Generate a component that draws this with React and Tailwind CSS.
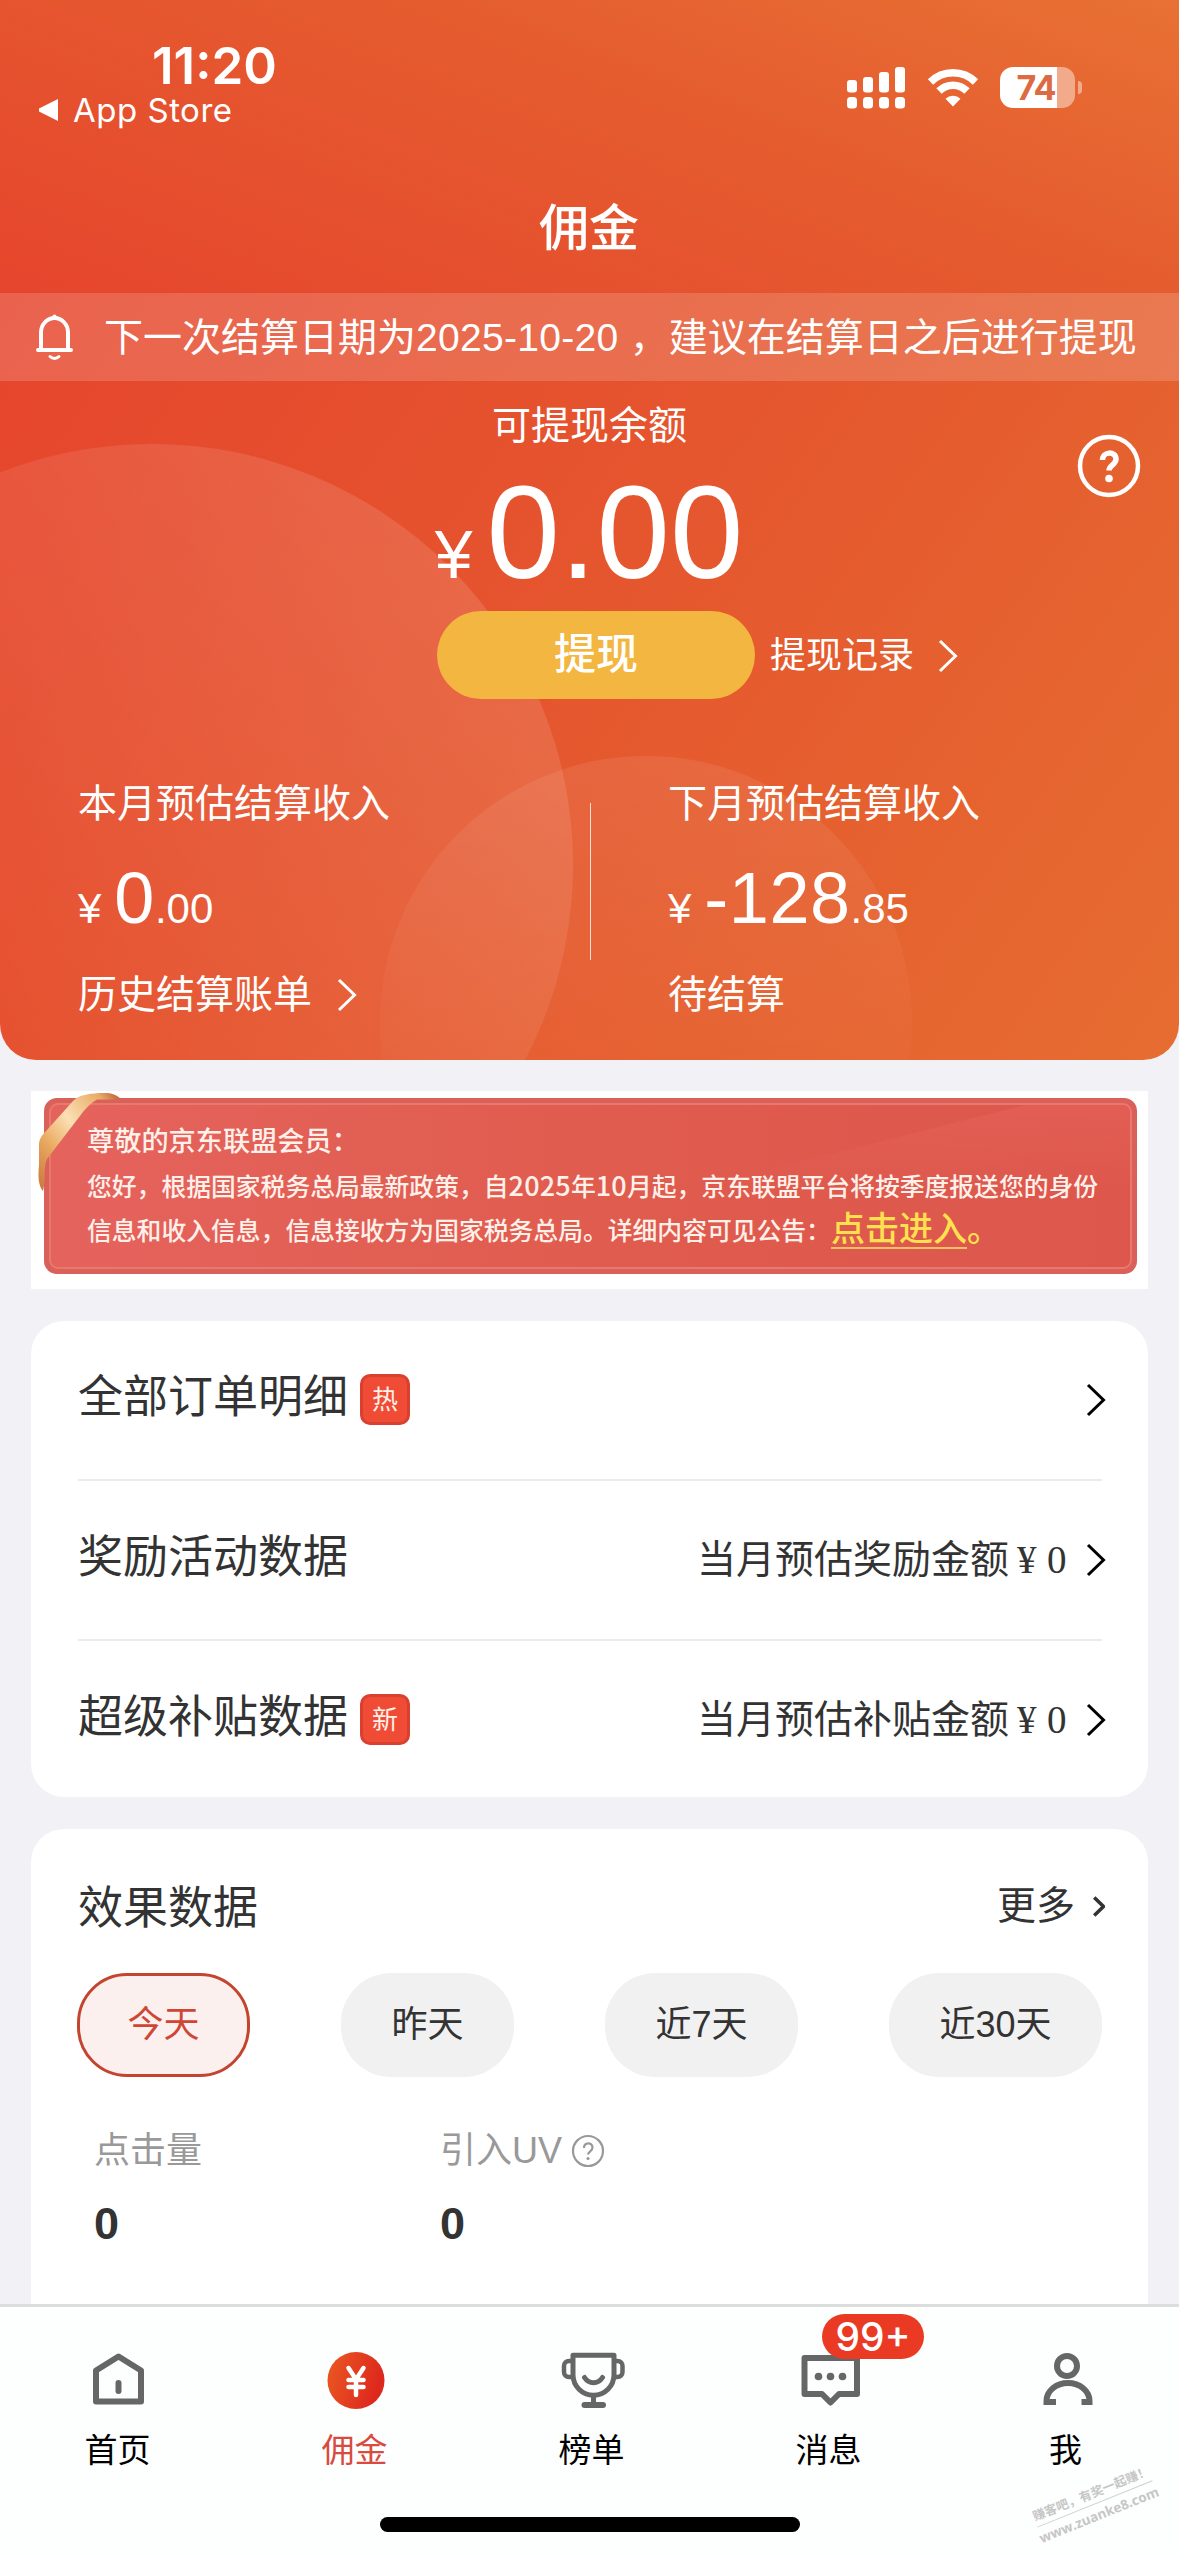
import React from 'react';

const tabs = [
  { name: '首页', icon: HomeIcon },
  { name: '佣金', icon: CoinIcon, active: true },
  { name: '榜单', icon: TrophyIcon },
  { name: '消息', icon: MessageIcon, badge: '99+' },
  { name: '我', icon: UserIcon },
];

const orderRows = [
  { title: '全部订单明细', tag: '热' },
  { title: '奖励活动数据', label: '当月预估奖励金额' },
  { title: '超级补贴数据', tag: '新', label: '当月预估补贴金额' },
];

const ranges = [
  { name: '今天', width: 'w-[173px]', active: true },
  { name: '昨天', width: 'w-[173px]' },
  { name: '近7天', width: 'w-[193px]' },
  { name: '近30天', width: 'w-[213px]' },
];

function HomeIcon() {
  return (
    <svg width="60" height="60" viewBox="0 0 60 60" fill="none" stroke="#666" strokeWidth="6" strokeLinejoin="round" strokeLinecap="round">
      <path d="M7 19.500 29.500 5.500 52 19.500V50.500H7Z" />
      <path d="M29.500 32v8" />
    </svg>
  );
}

function CoinIcon() {
  return (
    <svg width="60" height="60" viewBox="0 0 60 60" fill="none">
      <defs>
        <linearGradient id="coin" x1="0" y1="0" x2="1" y2="0.3">
          <stop offset="0" stopColor="#ea5a22" />
          <stop offset="1" stopColor="#dd281d" />
        </linearGradient>
      </defs>
      <circle cx="30" cy="29.500" r="28.500" fill="url(#coin)" />
      <path d="M22.500 17 30 28.500 37.500 17M22.500 29h15M22.500 36h15M30 29v15" stroke="#fff" strokeWidth="4.500" strokeLinecap="round" />
    </svg>
  );
}

function TrophyIcon() {
  return (
    <svg width="66" height="60" viewBox="0 0 66 60" fill="none" stroke="#666" strokeWidth="5" strokeLinecap="round" strokeLinejoin="round">
      <path d="M13 4.200h41v19.500a20.500 20.500 0 0 1-41 0Z" />
      <path d="M12.500 10H9a5 5 0 0 0-5 5v6a5 5 0 0 0 5 5h3.500M54.500 10H57.500a5 5 0 0 1 5 5v6a5 5 0 0 1-5 5h-3" strokeWidth="4.500" />
      <path d="M24.500 26.500c4.500 7 13.500 7 18 0M33.500 46v7" />
      <path d="M24.500 54h18.500" strokeWidth="6" />
    </svg>
  );
}

function MessageIcon() {
  return (
    <svg className="overflow-visible" width="60" height="60" viewBox="0 0 60 60" fill="none">
      <path d="M4.500 7H57v36H39L30.500 51.500 22 43H4.500Z" stroke="#666" strokeWidth="6" strokeLinejoin="round" />
      <circle cx="18.500" cy="25.500" r="3.800" fill="#666" />
      <circle cx="30.500" cy="25.500" r="3.800" fill="#666" />
      <circle cx="42.500" cy="25.500" r="3.800" fill="#666" />
    </svg>
  );
}

function UserIcon() {
  return (
    <svg width="60" height="60" viewBox="0 0 60 60" fill="none" stroke="#666" strokeWidth="6">
      <circle cx="30" cy="15" r="10" />
      <path d="M19 51H9.500v-1a21.500 18 0 0 1 43 0v1h-8" />
    </svg>
  );
}

function Chevron({ className, strokeWidth = 3 }) {
  return (
    <svg className={className} viewBox="0 0 20 34" fill="none" stroke="currentColor" strokeWidth={strokeWidth}>
      <path d="M2 2 17.500 17 2 32" />
    </svg>
  );
}

function StatusBar() {
  return (
    <div className="flex h-[170px] justify-between">
      <div className="w-[320px] font-['Inter']">
        <div className="mt-[36px] pl-[152px] text-[51px] leading-[60px] font-semibold">11:20</div>
        <div className="-mt-[2px] flex items-center pl-[38px] leading-[32px]">
          <svg width="22" height="24" viewBox="0 0 22 24" fill="#fff">
            <path d="M20 1v22L1 13.500v-3Z" />
          </svg>
          <span className="ml-[13px] text-[33px] tracking-[0.5px]">App Store</span>
        </div>
      </div>
      <div className="mt-[67px] mr-[97px] flex h-[42px] items-start">
        <svg width="58" height="42" viewBox="0 0 58 42" fill="#fff">
          <rect x="0" y="13" width="10" height="12.500" rx="3" />
          <rect x="16" y="10" width="10" height="15.500" rx="3" />
          <rect x="32" y="5" width="10" height="20.500" rx="3" />
          <rect x="48" y="0" width="10" height="25.500" rx="3" />
          <rect x="0" y="30" width="10" height="11.500" rx="3.500" />
          <rect x="16" y="30" width="10" height="11.500" rx="3.500" />
          <rect x="32" y="30" width="10" height="11.500" rx="3.500" />
          <rect x="48" y="30" width="10" height="11.500" rx="3.500" />
        </svg>
        <svg className="mt-[1px] ml-[22px]" width="52" height="40" viewBox="0 0 52 40" fill="none" stroke="#fff" strokeWidth="7.500">
          <path d="M3.500 14a32 32 0 0 1 45 0" />
          <path d="M12 23a19.700 19.700 0 0 1 28 0" />
          <path d="M26 38.500 18.500 30.800a10.800 10.800 0 0 1 15 0Z" fill="#fff" stroke="none" />
        </svg>
        <div className="ml-[21px] flex h-[41px] w-[75px] items-center justify-center rounded-[13px] bg-[linear-gradient(to_right,#fff_57px,#f1ab8b_57px)]">
          <span className="mr-[3px] font-['Inter'] text-[34px] leading-[41px] font-bold tracking-[-1px] text-[#dc6a42]">74</span>
        </div>
        <div className="mt-[14px] ml-[3px] h-[13px] w-[4px] rounded-r-full bg-[#f1ab8b]" />
      </div>
    </div>
  );
}

function Notice() {
  return (
    <div className="relative flex h-[88px] items-center bg-white/16 pl-[36px]">
      <svg width="37" height="46" viewBox="0 0 37 46" fill="none" stroke="#fff" strokeWidth="4" strokeLinejoin="round" strokeLinecap="round">
        <path d="M5 35V18.500a13.500 14.500 0 0 1 27 0V35" />
        <path d="M2 36h33" />
        <path d="M14 42.500c2.500 2.500 6.500 2.500 9 0" strokeWidth="3" />
        <path d="M18.500 4V2.500" />
      </svg>
      <span className="mt-[2px] ml-[31px] text-[39px] leading-[60px] whitespace-nowrap">
        下一次结算日期为<span className="tracking-[0.300px]">2025-10-20 </span>，建议在结算日之后进行提现
      </span>
    </div>
  );
}

function Estimate({ title, integer, decimal, footer, link }) {
  return (
    <div className="w-[591px] pl-[78px] text-[39px] leading-[50px] whitespace-nowrap">
      <div>{title}</div>
      <div className="mt-[30px] flex h-[78px] items-baseline leading-[78px]">
        <span className="text-[42px]">¥</span>
        <span className="ml-[13px] text-[72px] tracking-[0.5px]">{integer}</span>
        <span className="text-[42px]">{decimal}</span>
      </div>
      <div className="mt-[33px] flex items-center">
        {footer}
        {link && <Chevron className="ml-[25px] h-[34px] w-[20px]" />}
      </div>
    </div>
  );
}

function Hero() {
  return (
    <header className="h-[1060px] shrink-0 overflow-hidden rounded-b-[36px] text-white">
      <div className="h-[293px] bg-[linear-gradient(21deg,#e6452d,#e55c2f_60%,#e87134)]">
        <StatusBar />
        <h1 className="pt-[29px] pr-px text-center text-[50px] leading-[60px] font-medium">佣金</h1>
      </div>
      <div className="relative h-[767px] overflow-hidden bg-[linear-gradient(125deg,#e6452d,#e5562e_48%,#e66d31)]">
        <div className="absolute top-[151px] left-[-269px] size-[842px] rounded-full bg-linear-to-tr from-white/0 from-25% to-white/15" />
        <div className="absolute top-[463px] left-[380px] size-[532px] rounded-full bg-linear-to-b from-white/8 to-white/0 to-75%" />
        <Notice />
        <div className="relative">
          <div className="mt-[15px] text-center text-[39px] leading-[60px]">可提现余额</div>
          <div className="flex h-[154px] items-baseline justify-center pr-px leading-[154px]">
            <span className="text-[68px]">¥</span>
            <span className="ml-[14px] text-[132px]">0.00</span>
          </div>
          <svg className="absolute top-[38px] right-[38px]" width="64" height="64" viewBox="0 0 64 64" fill="none" stroke="#fff" strokeWidth="4.500">
            <circle cx="32" cy="32" r="29" />
            <path d="M25.500 26c0-9 13.500-9 13.500-1 0 6-7 6-7 11.500" strokeWidth="5.500" />
            <circle cx="32" cy="44.500" r="3.800" fill="#fff" stroke="none" />
          </svg>
          <div className="mt-px flex items-center pl-[437px]">
            <button className="h-[88px] w-[318px] rounded-full bg-[#f3b640] text-[42px] leading-[84px] font-medium">提现</button>
            <span className="mt-px ml-[15px] text-[36px]">提现记录</span>
            <Chevron className="mt-px ml-[24px] h-[34px] w-[20px]" />
          </div>
          <div className="mt-[80px] flex">
            <Estimate title="本月预估结算收入" integer="0" decimal=".00" footer="历史结算账单" link />
            <div className="mt-[24px] h-[157px] w-px translate-x-px bg-white/80" />
            <Estimate title="下月预估结算收入" integer="-128" decimal=".85" footer="待结算" />
          </div>
        </div>
      </div>
    </header>
  );
}

function Banner() {
  return (
    <section className="relative mx-[31px] mt-[31px] h-[198px] shrink-0 bg-white pt-[7px] pl-[13px]">
      <div className="h-[176px] w-[1093px] rounded-[13px] bg-[#d9615a] p-[5px]">
        <div className="relative h-full overflow-hidden rounded-[9px] border-2 border-[#e9786f] bg-linear-to-r from-[#e5635d] via-[#e05c4e] to-[#dd574c] pt-[16px] pl-[36px] whitespace-nowrap text-[#fff0ea]">
          <div className="absolute top-0 right-0 h-[80px] w-[420px] bg-linear-to-b from-[#e6625a]/60 to-[#e6625a]/0 [clip-path:polygon(75%_0,100%_0,100%_100%,0_100%)]" />
          <div className="relative font-['Noto_Sans_CJK_SC']">
            <p className="text-[27.200px] leading-[36px] font-medium">尊敬的京东联盟会员：</p>
            <p className="mt-[10px] h-[36px] text-[24.800px] leading-[36px] font-medium">
              您好，根据国家税务总局最新政策，自<span className="text-[27px] tracking-[0.200px]">2025</span>年<span className="text-[27px] tracking-[0.200px]">10</span>月起，京东联盟平台将按季度报送您的身份
            </p>
            <p className="mt-[5px] flex h-[44px] items-center text-[24.800px] font-medium">
              信息和收入信息，信息接收方为国家税务总局。详细内容可见公告：
              <span className="mb-[4px] flex text-[34px] leading-[40px] text-[#ffe14f]">
                <span className="border-b-2 border-[#f8bf63]">点击进入</span>。
              </span>
            </p>
          </div>
        </div>
      </div>
      {/* gold ribbon wrapped over the corner */}
      <svg className="absolute top-[2px] left-[6px]" width="86" height="100" viewBox="0 0 86 100">
        <defs>
          <linearGradient id="ribbon" x1="0" y1="1" x2="1" y2="0">
            <stop offset="0" stopColor="#c9753a" />
            <stop offset="0.300" stopColor="#e9a960" />
            <stop offset="0.550" stopColor="#fbe0b4" />
            <stop offset="0.850" stopColor="#e9ac66" />
            <stop offset="1" stopColor="#b5532f" />
          </linearGradient>
        </defs>
        <path d="M62 0C73-1 81 2 84 6.500H60C54 10 50 14 46 19L10 66C6 74 9 88 6 98 1 92 1 82 2 72V52C2 46 5 42 10 37L36 8C42 2 50 1 62 0Z" fill="url(#ribbon)" />
      </svg>
    </section>
  );
}

function Tag({ children }) {
  return (
    <span className="mt-[-2px] ml-[12px] flex h-[51px] w-[50px] items-center justify-center rounded-[10px] border-[3px] border-[#da4030] bg-[#ef4b35] pt-[2px] text-[26px] leading-none text-[#fff0e8]">
      {children}
    </span>
  );
}

function OrderCard() {
  return (
    <section className="mx-[31px] mt-[32px] h-[476px] shrink-0 rounded-[33px] bg-white pr-[46px] pl-[47px] whitespace-nowrap text-[#333]">
      {orderRows.map((row) => (
        <div key={row.title} className="flex h-[160px] items-center border-b-2 border-[#ebebeb] last:h-[158px] last:border-0">
          <span className="mt-[-4px] text-[45px] leading-[60px]">{row.title}</span>
          {row.tag && <Tag>{row.tag}</Tag>}
          <span className="mr-[-4px] ml-auto flex items-center text-[39px] leading-[50px]">
            {row.label}
            {row.label && <span className="ml-[8px] font-['Liberation_Serif'] tracking-[10.500px]">¥0</span>}
            <Chevron className="ml-[9px] h-[34px] w-[20px] text-black" />
          </span>
        </div>
      ))}
    </section>
  );
}

function EffectCard() {
  return (
    <section className="mx-[31px] mt-[32px] h-[500px] shrink-0 rounded-t-[33px] bg-white px-[46px] whitespace-nowrap text-[#333]">
      <div className="flex h-[144px] items-center pt-[16px] pl-[1px]">
        <h2 className="text-[45px] leading-[60px]">效果数据</h2>
        <span className="-mt-[7px] ml-auto text-[39px] leading-[50px]">更多</span>
        <Chevron className="-mt-[5px] mr-[-3px] ml-[18px] h-[25px] w-[12px]" strokeWidth={6} />
      </div>
      <div className="flex justify-between text-[36px]">
        {ranges.map((r) => (
          <button
            key={r.name}
            className={`h-[104px] rounded-[50px] ${r.width} ${
              r.active ? 'border-[3px] border-[#c3452f] bg-[#fbf0ed] text-[#cf4637]' : 'bg-[#f1f1f1]'
            }`}
          >
            {r.name}
          </button>
        ))}
      </div>
      <div className="mt-[49px] flex pl-[17px]">
        <div className="w-[346px]">
          <div className="text-[36px] leading-[50px] text-[#999]">点击量</div>
          <div className="mt-[23px] text-[45px] leading-[50px] font-bold">0</div>
        </div>
        <div>
          <div className="flex items-center text-[36px] leading-[50px] text-[#999]">
            引入UV
            <svg className="ml-[9px]" width="34" height="34" viewBox="0 0 34 34" fill="none" stroke="#999" strokeWidth="2.200">
              <circle cx="17" cy="17" r="15" />
              <path d="M13 14c0-6 8.500-6 8.500-0.500 0 3.500-4.300 4-4.300 7" />
              <circle cx="17" cy="24.500" r="1.600" fill="#999" stroke="none" />
            </svg>
          </div>
          <div className="mt-[23px] text-[45px] leading-[50px] font-bold">0</div>
        </div>
      </div>
    </section>
  );
}

function TabBar() {
  return (
    <nav className="relative h-[252px] shrink-0 border-t-[3px] border-[#dcdedd] bg-[#fdfefe] pt-[44px]">
      <div className="grid w-[1185px] grid-cols-5">
        {tabs.map((tab) => {
          const Icon = tab.icon;
          return (
            <div key={tab.name} className="relative flex flex-col items-center">
              <div className="h-[60px]"><Icon /></div>
              <span className={`mt-[18px] mr-[2px] text-[33px] leading-[44px] ${tab.active ? 'text-[#d94a40]' : 'text-black'}`}>
                {tab.name}
              </span>
              {tab.badge && (
                <span className="absolute top-[-37px] left-[111px] flex h-[45px] w-[102px] items-center justify-center rounded-full bg-[#ea3a24] font-['Inter'] text-[39px] leading-none font-medium text-white">
                  {tab.badge}
                </span>
              )}
            </div>
          );
        })}
      </div>
      <div className="mx-auto mt-[44px] h-[15px] w-[420px] rounded-full bg-black" />
      <div className="absolute right-[22px] bottom-[31px] w-[122px] rotate-[-22deg] text-center font-bold whitespace-nowrap text-[#c6c6c6]">
        <div className="-ml-[2px] border-b border-[#d0d0d0] text-[12.500px] leading-[20px]">赚客吧，有奖一起赚！</div>
        <div className="-ml-[4px] pt-px font-['Open_Sans'] text-[13.500px] leading-[20px]">www.zuanke8.com</div>
      </div>
    </nav>
  );
}

export default function App() {
  return (
    <div className="flex h-[2556px] w-[1179px] flex-col overflow-hidden bg-[#f1f1f6] font-['Liberation_Sans','Noto_Sans_CJK_SC',sans-serif]">
      <main className="flex h-[2304px] shrink-0 flex-col overflow-hidden">
        <Hero />
        <Banner />
        <OrderCard />
        <EffectCard />
      </main>
      <TabBar />
    </div>
  );
}
